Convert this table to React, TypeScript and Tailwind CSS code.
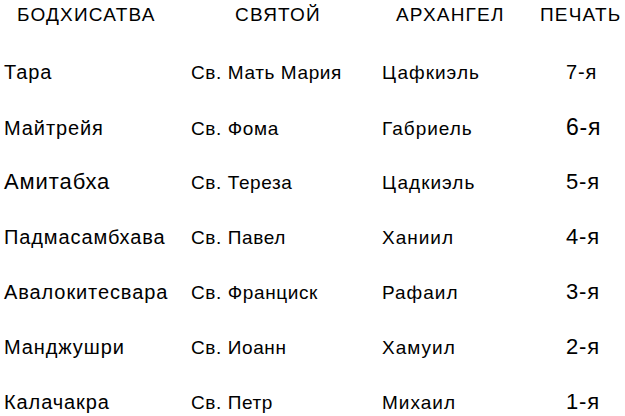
import React from 'react';

const rows = [
  { bodhi: 'Тара', saint: 'Св. Мать Мария', arch: 'Цафкиэль', seal: '7-я', bs: 'text-[20px]', ss: 'text-[20px]' },
  { bodhi: 'Майтрейя', saint: 'Св. Фома', arch: 'Габриель', seal: '6-я', bs: 'text-[20px]', ss: 'text-[23px]' },
  { bodhi: 'Амитабха', saint: 'Св. Тереза', arch: 'Цадкиэль', seal: '5-я', bs: 'text-[22px]', ss: 'text-[22px]' },
  { bodhi: 'Падмасамбхава', saint: 'Св. Павел', arch: 'Ханиил', seal: '4-я', bs: 'text-[20px]', ss: 'text-[22px]' },
  { bodhi: 'Авалокитесвара', saint: 'Св. Франциск', arch: 'Рафаил', seal: '3-я', bs: 'text-[20px]', ss: 'text-[22px]' },
  { bodhi: 'Манджушри', saint: 'Св. Иоанн', arch: 'Хамуил', seal: '2-я', bs: 'text-[20px]', ss: 'text-[22px]' },
  { bodhi: 'Калачакра', saint: 'Св. Петр', arch: 'Михаил', seal: '1-я', bs: 'text-[20px]', ss: 'text-[22px]' },
];

export default function App() {
  return (
    <div className="w-[625px] h-[416px] bg-white text-black overflow-hidden font-['Liberation_Sans',Arial,sans-serif]">
      <div className="grid grid-cols-[187px_192px_150px_1fr] items-baseline h-[30px] pt-[2px] text-[19px] leading-[26px] tracking-[1.2px]">
        <div className="pl-[17px]">БОДХИСАТВА</div>
        <div className="pl-[48px]">СВЯТОЙ</div>
        <div className="pl-[17px]">АРХАНГЕЛ</div>
        <div className="pl-[11px]">ПЕЧАТЬ</div>
      </div>
      <div className="pt-[29px]">
        {rows.map((r) => (
          <div
            key={r.bodhi}
            className="grid grid-cols-[187px_192px_150px_1fr] items-baseline h-[55px] text-[19px] leading-[26px] tracking-[0.6px]"
          >
            <div className={`pl-[4px] tracking-[0.9px] ${r.bs}`}>{r.bodhi}</div>
            <div className="pl-[4px]">{r.saint}</div>
            <div className="pl-[3px] tracking-[1px]">{r.arch}</div>
            <div className={`pl-[37px] tracking-[0.8px] ${r.ss}`}>{r.seal}</div>
          </div>
        ))}
      </div>
    </div>
  );
}
